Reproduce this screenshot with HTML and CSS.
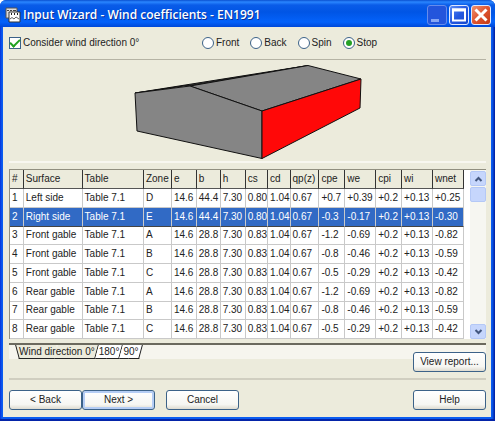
FILE: index.html
```html
<!DOCTYPE html>
<html lang="en">
<head>
<meta charset="utf-8">
<title>Input Wizard - Wind coefficients - EN1991</title>
<link rel="stylesheet" href="styles.css">
</head>
<body>
<div class="window">
  <header class="titlebar">
    <svg class="app-icon" width="16" height="16" viewBox="0 0 16 16" aria-hidden="true">
      <path d="M1 1h11v10H1z" fill="#ddd" stroke="#555"/>
      <path d="M2 3.500h2M5 3.500h2M8 3.500h3" stroke="#444"/>
      <path d="M4 5h11v10H4z" fill="#fff" stroke="#333"/>
      <path d="M6.500 6v2M9.500 6v2M12.500 6v2" stroke="#222"/>
      <path d="M5 12l2-1.500 2 1.500 2-2 3 2" fill="none" stroke="#666"/>
    </svg>
    <h1>Input Wizard - Wind coefficients - EN1991</h1>
    <div class="controls">
      <button class="ctl dim" type="button" aria-label="Minimize"><svg width="20" height="20" viewBox="0 0 20 20"><path d="M4 14h8v3H4z" fill="#86a6f4"/></svg></button>
      <button class="ctl" type="button" aria-label="Maximize"><svg width="20" height="20" viewBox="0 0 20 20"><path d="M4 4.500h12v11H4z" fill="none" stroke="#fff" stroke-width="2"/><path d="M3 5h14" stroke="#fff" stroke-width="3"/></svg></button>
      <button class="ctl close" type="button" aria-label="Close"><svg width="20" height="20" viewBox="0 0 20 20"><path d="M4.500 4.500l11 11M15.500 4.500l-11 11" stroke="#fff" stroke-width="3"/></svg></button>
    </div>
  </header>
  <main class="content">
    <div class="options">
      <label class="opt consider"><input type="checkbox" checked>Consider wind direction 0°</label>
      <label class="opt"><input type="radio" name="view">Front</label>
      <label class="opt"><input type="radio" name="view">Back</label>
      <label class="opt"><input type="radio" name="view">Spin</label>
      <label class="opt"><input type="radio" name="view" checked>Stop</label>
    </div>
    <div class="preview">
      <svg width="228" height="96" viewBox="0 0 228 96" role="img" aria-label="Building with the right side highlighted">
        <g stroke="#111" stroke-linejoin="round">
          <path d="M1 29L174 1.500 56 22 50 22z" fill="#333"/>
          <path d="M56 22L174 1.500 227 15 128 47z" fill="#858585"/>
          <path d="M1 29L56 22 128 47V94.500L3 67z" fill="#858585"/>
          <path d="M128 47L227 15 226 44 128 94.500z" fill="#ff0808"/>
        </g>
      </svg>
    </div>
    <div class="grid">
      <table>
        <colgroup>
          <col class="c-num"><col class="c-surface"><col class="c-table"><col class="c-zone"><col class="c-e"><col class="c-b"><col class="c-h"><col class="c-cs"><col class="c-cd"><col class="c-qp"><col class="c-cpe"><col class="c-we"><col class="c-cpi"><col class="c-wi"><col class="c-wnet">
        </colgroup>
        <thead>
          <tr><th>#</th><th>Surface</th><th>Table</th><th>Zone</th><th>e</th><th>b</th><th>h</th><th>cs</th><th>cd</th><th>qp(z)</th><th>cpe</th><th>we</th><th>cpi</th><th>wi</th><th>wnet</th></tr>
        </thead>
        <tbody>
          <tr><td>1</td><td>Left side</td><td>Table 7.1</td><td>D</td><td>14.6</td><td>44.4</td><td>7.30</td><td>0.80</td><td>1.04</td><td>0.67</td><td>+0.7</td><td>+0.39</td><td>+0.2</td><td>+0.13</td><td>+0.25</td></tr>
          <tr class="selected"><td>2</td><td>Right side</td><td>Table 7.1</td><td>E</td><td>14.6</td><td>44.4</td><td>7.30</td><td>0.80</td><td>1.04</td><td>0.67</td><td>-0.3</td><td>-0.17</td><td>+0.2</td><td>+0.13</td><td>-0.30</td></tr>
          <tr><td>3</td><td>Front gable</td><td>Table 7.1</td><td>A</td><td>14.6</td><td>28.8</td><td>7.30</td><td>0.83</td><td>1.04</td><td>0.67</td><td>-1.2</td><td>-0.69</td><td>+0.2</td><td>+0.13</td><td>-0.82</td></tr>
          <tr><td>4</td><td>Front gable</td><td>Table 7.1</td><td>B</td><td>14.6</td><td>28.8</td><td>7.30</td><td>0.83</td><td>1.04</td><td>0.67</td><td>-0.8</td><td>-0.46</td><td>+0.2</td><td>+0.13</td><td>-0.59</td></tr>
          <tr><td>5</td><td>Front gable</td><td>Table 7.1</td><td>C</td><td>14.6</td><td>28.8</td><td>7.30</td><td>0.83</td><td>1.04</td><td>0.67</td><td>-0.5</td><td>-0.29</td><td>+0.2</td><td>+0.13</td><td>-0.42</td></tr>
          <tr><td>6</td><td>Rear gable</td><td>Table 7.1</td><td>A</td><td>14.6</td><td>28.8</td><td>7.30</td><td>0.83</td><td>1.04</td><td>0.67</td><td>-1.2</td><td>-0.69</td><td>+0.2</td><td>+0.13</td><td>-0.82</td></tr>
          <tr><td>7</td><td>Rear gable</td><td>Table 7.1</td><td>B</td><td>14.6</td><td>28.8</td><td>7.30</td><td>0.83</td><td>1.04</td><td>0.67</td><td>-0.8</td><td>-0.46</td><td>+0.2</td><td>+0.13</td><td>-0.59</td></tr>
          <tr><td>8</td><td>Rear gable</td><td>Table 7.1</td><td>C</td><td>14.6</td><td>28.8</td><td>7.30</td><td>0.83</td><td>1.04</td><td>0.67</td><td>-0.5</td><td>-0.29</td><td>+0.2</td><td>+0.13</td><td>-0.42</td></tr>
        </tbody>
      </table>
      <div class="scrollbar">
        <button type="button" aria-label="Scroll up"><svg width="9" height="6" viewBox="0 0 9 6"><path d="M1.500 5l3-3 3 3" fill="none" stroke="#43577f" stroke-width="2"/></svg></button>
        <div class="thumb"></div>
        <button class="down" type="button" aria-label="Scroll down"><svg width="9" height="6" viewBox="0 0 9 6"><path d="M1.500 1l3 3 3-3" fill="none" stroke="#43577f" stroke-width="2"/></svg></button>
      </div>
    </div>
    <div class="tabs">
      <button class="tab active" type="button"><span>Wind direction 0°</span></button>
      <button class="tab" type="button"><span>180°</span></button>
      <button class="tab" type="button"><span>90°</span></button>
    </div>
    <div class="report"><button class="btn" type="button">View report...</button></div>
    <footer class="actions">
      <button class="btn" type="button">&lt; Back</button>
      <button class="btn default" type="button">Next &gt;</button>
      <button class="btn cancel" type="button">Cancel</button>
      <button class="btn help" type="button">Help</button>
    </footer>
  </main>
</div>
</body>
</html>
```
FILE: styles.css
```css
* { box-sizing: border-box; }

body {
  margin: 0;
  background: #fff;
  color: #222;
  font: 10px/14px "Liberation Sans", Arial, sans-serif;
}

button, input { font: inherit; color: inherit; margin: 0; padding: 0; }

.window {
  display: flex;
  flex-direction: column;
  min-height: 100vh;
  padding: 0 4px 4px 3px;
  border-radius: 6px 6px 0 0;
  background: linear-gradient(90deg, #0831d9, #0a5cf0 2px, #0a5cf0 calc(100% - 3px), #001a9c);
  box-shadow: inset 0 -2px #0424a8;
}

.titlebar {
  display: flex;
  align-items: center;
  height: 27px;
  margin: 0 -4px 0 -3px;
  padding: 2px 4px 0 5px;
  border-radius: 6px 6px 0 0;
  background: linear-gradient(#0a50d0, #2a86ff 2px, #0a5ce8 5px, #0055e5 12px, #0462fa 22px, #0048d8);
}

.app-icon { flex: none; }

h1 {
  flex: 1;
  margin: 0 0 0 2px;
  color: #fff;
  font: 600 12px/16px "Open Sans", sans-serif;
  text-shadow: 1px 1px #0a2f95;
  white-space: nowrap;
}

.controls { display: flex; gap: 2px; }

.ctl {
  display: grid;
  place-items: center;
  width: 20px;
  height: 20px;
  border: 1px solid #dfe8ff;
  border-radius: 3px;
  background: linear-gradient(135deg, #5f8ff5, #2458e0 50%, #1748cc);
}
.ctl svg { flex: none; margin: -1px; }
.ctl.dim { border-color: #668cec; background: #2355dc; }
.ctl.close { background: linear-gradient(135deg, #ef9270, #de5430 50%, #c43a14); }

.content {
  display: flex;
  flex: 1;
  flex-direction: column;
  padding: 0 5px 7px 6px;
  background: #ecebdc;
}

.options {
  display: flex;
  align-items: center;
  gap: 11px;
  height: 33px;
  border-bottom: 1px solid #b5b3a4;
}
.opt { display: flex; align-items: center; gap: 2px; white-space: nowrap; }
.consider { flex: 0 0 182px; }

.opt input {
  appearance: none;
  display: grid;
  place-items: center;
  width: 12px;
  height: 12px;
  border: 1px solid #3c6288;
  background: #fff;
}
.opt input[type="radio"] { border-radius: 50%; }
.opt input[type="radio"]:checked::before {
  content: "";
  width: 6px;
  height: 6px;
  border-radius: 50%;
  background: #25a025;
}
.opt input[type="checkbox"]:checked::before {
  content: "";
  width: 8px;
  height: 4px;
  margin-top: -3px;
  border: solid #21a121;
  border-width: 0 0 2px 2px;
  transform: rotate(-45deg);
}

.preview {
  height: 103px;
  padding-left: 125px;
  padding-top: 4px;
  border-bottom: 2px solid #f8f7f0;
}

.grid {
  display: flex;
  justify-content: space-between;
  height: 170px;
  margin-top: 6px;
  border-top: 1px solid #918f80;
  border-left: 1px solid #918f80;
  background: #fff;
}

table {
  flex: 0 1 454px;
  height: 169px;
  border-collapse: separate;
  border-spacing: 0;
  table-layout: fixed;
}

.c-num { width: 14px; }
.c-surface { width: 59px; }
.c-table { width: 62px; }
.c-zone { width: 28px; }
.c-e, .c-h { width: 25px; }
.c-b { width: 24px; }
.c-cs, .c-cd { width: 22px; }
.c-qp { width: 29px; }
.c-cpe, .c-cpi { width: 26px; }
.c-we, .c-wi, .c-wnet { width: 31px; }

th, td {
  padding: 0 0 0 2px;
  text-align: left;
  white-space: nowrap;
  overflow: hidden;
  font-weight: normal;
  line-height: 14px;
}
th { height: 19px; border-right: 1px solid #333; border-bottom: 1px solid #555; background: #ecebdc; }
td { border-right: 1px solid #c9c9c9; border-bottom: 1px solid #c9c9c9; }
.selected td { border-bottom-color: #444; background: #316ac5; color: #fff; }

.scrollbar {
  display: flex;
  flex: 0 0 16px;
  flex-direction: column;
  gap: 1px;
  padding-top: 1px;
  background: #f6f6f1;
}
.scrollbar button, .thumb {
  display: grid;
  place-items: center;
  height: 15px;
  border: 1px solid #b4c8f6;
  border-radius: 2px;
  background: #c6d6fc;
}
.scrollbar .down { margin-top: auto; }

.tabs {
  display: flex;
  height: 16px;
  margin-top: 4px;
  padding-left: 8px;
  border-top: 2px solid #6b695e;
  background: #f6f5ee;
}
.tab {
  position: relative;
  height: 14px;
  padding: 0 2px;
  border: 0;
  background: none;
}
.tab span { position: relative; z-index: 1; }
.tab::before, .tab::after {
  content: "";
  position: absolute;
  top: 0;
  bottom: 0;
  width: 50%;
  border-bottom: 1px solid #222;
  background: #fff;
}
.tab::before { left: 0; border-left: 1px solid #222; transform: skewX(15deg); }
.tab::after { right: 0; border-right: 1px solid #222; transform: skewX(-15deg); }
.tab + .tab::before { border-left: 0; transform: skewX(-15deg); }
.tab.active::before, .tab.active::after { background: #ecebdc; }

.report {
  display: flex;
  justify-content: flex-end;
  height: 20px;
  margin-top: -7px;
}

.btn {
  width: 73px;
  height: 20px;
  border: 1px solid #3c6288;
  border-radius: 3px;
  background: linear-gradient(#fff, #f6f6f2 75%, #dedbd0);
}
.btn.default { box-shadow: inset 0 0 0 2px #b5cdf4; }

.actions {
  display: flex;
  margin-top: 6px;
  padding-top: 10px;
  border-top: 2px solid #d0cec0;
}
.cancel { margin-left: 11px; }
.help { margin-left: auto; }
```
